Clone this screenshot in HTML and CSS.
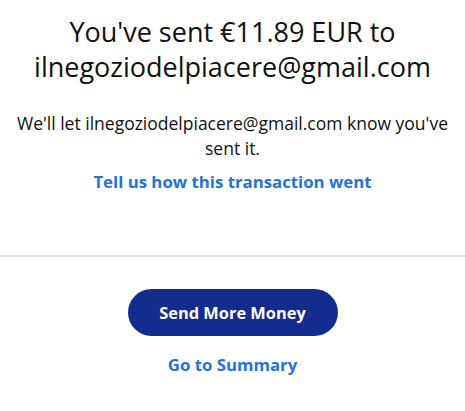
FILE: index.html
```html
<!DOCTYPE html>
<html>
<head>
<meta charset="utf-8">
<link rel="stylesheet" href="styles.css">
</head>
<body>
<main class="page">
  <section class="top">
    <h1 class="title">You've sent €11.89 EUR to ilnegoziodelpiacere@gmail.com</h1>
    <p class="note">We'll let ilnegoziodelpiacere@gmail.com know you've sent it.</p>
    <a class="link feedback" href="#">Tell us how this transaction went</a>
  </section>
  <hr class="divider">
  <section class="actions">
    <button class="primary">Send More Money</button>
    <a class="link summary" href="#">Go to Summary</a>
  </section>
</main>
</body>
</html>
```
FILE: styles.css
```css
* { box-sizing: border-box; }
html, body { margin: 0; padding: 0; background: #ffffff; }
body { font-family: "Open Sans", "Noto Sans", sans-serif; color: #111111; }
.page { width: 465px; display: flex; flex-direction: column; }
.top { display: flex; flex-direction: column; align-items: center; text-align: center; padding: 14px 8px 0; }
.title { margin: 0; font-size: 27px; font-weight: 400; line-height: 35px; max-width: 449px; }
.note { margin: 27px 0 0; font-size: 17.5px; line-height: 25px; max-width: 449px; }
.link { color: #2374d8; font-weight: 700; text-decoration: none; font-size: 16.8px; line-height: 22px; }
.feedback { margin-top: 10px; }
.divider { margin: 62px 0 0; border: 0; height: 2px; background: #e3e3e3; }
.actions { display: flex; flex-direction: column; align-items: center; padding-top: 32px; }
.primary { width: 210px; height: 47px; border: 0; border-radius: 24px; background: #142c8e; color: #fff; font-family: inherit; font-size: 16.4px; font-weight: 700; }
.summary { margin-top: 18px; }
```
